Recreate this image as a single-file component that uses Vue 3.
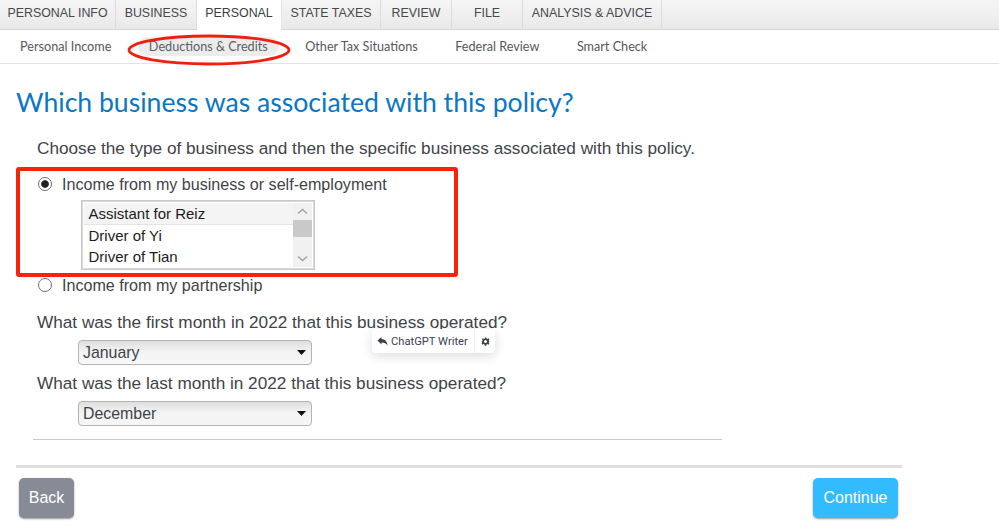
<script setup>
const tabs = [
  { label: 'PERSONAL INFO', w: 116 },
  { label: 'BUSINESS', w: 81 },
  { label: 'PERSONAL', w: 85, active: true },
  { label: 'STATE TAXES', w: 99 },
  { label: 'REVIEW', w: 71 },
  { label: 'FILE', w: 71 },
  { label: 'ANALYSIS & ADVICE', w: 139 }
]
const subs = ['Personal Income', 'Deductions & Credits', 'Other Tax Situations', 'Federal Review', 'Smart Check']
const businesses = ['Assistant for Reiz', 'Driver of Yi', 'Driver of Tian']
</script>

<template>
  <div class="page">
    <nav class="tabs">
      <div v-for="t in tabs" :key="t.label" class="tab" :class="{ active: t.active }" :style="{ width: t.w + 'px' }">{{ t.label }}</div>
    </nav>
    <nav class="subs">
      <div v-for="(s, i) in subs" :key="s" class="sub" :class="{ current: i === 1 }">{{ s }}</div>
    </nav>

    <main class="main">
      <h1 class="title">Which business was associated with this policy?</h1>
      <div class="form">
        <p class="intro">Choose the type of business and then the specific business associated with this policy.</p>

        <div class="radio-row first">
          <span class="radio on"></span>
          <span>Income from my business or self-employment</span>
        </div>
        <div class="listbox">
          <div class="options">
            <div v-for="(b, i) in businesses" :key="b" class="option" :class="{ selected: i === 0 }">{{ b }}</div>
          </div>
          <div class="scrollbar">
            <svg class="arrow" width="17" height="17" viewBox="0 0 17 17"><path d="M4 10.5 8.5 6.5 13 10.5" fill="none" stroke="#a3a3a3" stroke-width="1.5" /></svg>
            <div class="thumb"></div>
            <div class="track"></div>
            <svg class="arrow" width="17" height="17" viewBox="0 0 17 17"><path d="M4 6.5 8.5 10.5 13 6.5" fill="none" stroke="#a3a3a3" stroke-width="1.5" /></svg>
          </div>
        </div>
        <div class="radio-row second">
          <span class="radio"></span>
          <span>Income from my partnership</span>
        </div>

        <p class="question q1">What was the first month in 2022 that this business operated?</p>
        <div class="select">
          <span>January</span>
          <svg width="9" height="5" viewBox="0 0 9 5"><path d="M0 0H9L4.5 5Z" fill="#111" /></svg>
        </div>
        <p class="question q2">What was the last month in 2022 that this business operated?</p>
        <div class="select">
          <span>December</span>
          <svg width="9" height="5" viewBox="0 0 9 5"><path d="M0 0H9L4.5 5Z" fill="#111" /></svg>
        </div>
      </div>

      <hr class="thin" />
      <hr class="thick" />
      <div class="actions">
        <button class="btn back">Back</button>
        <button class="btn continue">Continue</button>
      </div>
    </main>

    <div class="annot-rect"></div>
    <svg class="annot-ellipse" width="170" height="36" viewBox="0 0 170 36">
      <ellipse cx="85" cy="18" rx="80" ry="14" fill="none" stroke="#f0200f" stroke-width="2.8" />
    </svg>

    <div class="chip">
      <div class="chip-main">
        <svg width="11" height="9" viewBox="0 0 10 9"><path d="M0 3.6 4 0V2.1C7.6 2.3 9.6 4.3 10 8.6 8.8 6.6 7 5.5 4 5.5V7.4Z" fill="#3a4250" /></svg>
        <span>ChatGPT Writer</span>
      </div>
      <div class="chip-gear">
        <svg width="9" height="9" viewBox="0 0 24 24"><path fill-rule="evenodd" d="M10 1h4l.7 3.2 2.2.9 2.8-1.8 2.8 2.8-1.8 2.8.9 2.2L24 12v0l-2.4.9-.9 2.2 1.8 2.8-2.8 2.8-2.8-1.8-2.2.9L14 23h-4l-.7-3.2-2.2-.9-2.8 1.8-2.8-2.8 1.8-2.8-.9-2.2L0 12l3.4-.9.9-2.2L2.5 6.1l2.8-2.8 2.8 1.8 2.2-.9ZM12 8a4 4 0 1 0 0 8 4 4 0 0 0 0-8Z" fill="#3a4250" /></svg>
      </div>
    </div>
  </div>
</template>

<style>
html, body { margin: 0; background: #fff; }
</style>

<style scoped>
.page {
  position: relative;
  width: 999px;
  height: 531px;
  overflow: hidden;
  background: #fff;
  font-family: "Liberation Sans", Arial, sans-serif;
  color: #3f4349;
}
.tabs {
  display: flex;
  height: 30px;
  box-sizing: border-box;
  background: linear-gradient(#f5f5f5, #e9e9e9);
  border-bottom: 1px solid #d6d6d6;
}
.tab {
  box-sizing: border-box;
  height: 30px;
  flex: none;
  display: flex;
  align-items: center;
  justify-content: center;
  padding-bottom: 4px;
  font-size: 12.4px;
  color: #46494d;
  border-right: 1px solid #dcdcdc;
  white-space: nowrap;
}
.tab.active { background: #fff; border-right: 1px solid #e4e4e4; color: #3b3e42; }
.subs {
  position: relative;
  z-index: 0;
  display: flex;
  height: 34px;
  box-sizing: border-box;
  padding-left: 20px;
  gap: 37.5px;
  align-items: center;
  border-bottom: 1px solid #e3e3e3;
  font-family: Lato, sans-serif;
  font-size: 12.65px;
  color: #55585c;
}
.sub { white-space: nowrap; }
.sub.current { position: relative; color: #5b5e62; }
.sub.current::before {
  content: "";
  position: absolute;
  left: -11px;
  right: -11px;
  top: -2px;
  bottom: -2px;
  border-radius: 11px;
  background: #ececec;
  z-index: -1;
}
.main { padding: 0 0 0 16px; width: 886px; }
.title {
  margin: 22px 0 0;
  font-family: Lato, sans-serif;
  font-size: 26.6px;
  line-height: 32px;
  font-weight: 400;
  color: #0a77c4;
  white-space: nowrap;
}
.form { padding-left: 21px; font-size: 17.2px; }
.intro { margin: 20px 0 0; line-height: 20px; white-space: nowrap; }
.radio-row { display: flex; align-items: center; gap: 10px; height: 20px; margin-left: 1px; line-height: 20px; font-size: 16.1px; }
.radio-row.first { margin-top: 16px; }
.radio-row.second { margin-top: 5px; }
.radio {
  box-sizing: border-box;
  width: 14px;
  height: 14px;
  border-radius: 50%;
  border: 1px solid #6f6f6f;
  background: #fff;
  flex: none;
}
.radio.on { background: radial-gradient(circle, #222 0 3.4px, #fff 4.2px); }
.listbox {
  display: flex;
  box-sizing: border-box;
  width: 234px;
  height: 70px;
  margin: 6px 0 0 44px;
  border: 1px solid #c8c8c8;
  outline: 1px solid #d8d8d8;
  outline-offset: -2px;
  color: #1c1c1c;
  font-size: 15px;
  padding: 2px;
}
.options { flex: 1; }
.option { height: 21.6px; line-height: 21.6px; padding-left: 4.5px; white-space: nowrap; }
.option.selected { background: #f4f4f4; border-bottom: 1px solid #e4e4e4; box-sizing: border-box; }
.scrollbar { width: 19px; display: flex; flex-direction: column; background: #f1f1f1; align-items: center; }
.arrow { flex: none; }
.thumb { width: 100%; height: 17px; background: #c9c9c9; flex: none; }
.track { flex: 1; }
.question { margin: 0; line-height: 20px; white-space: nowrap; }
.question.q1 { margin-top: 17px; }
.question.q2 { margin-top: 8px; }
.select {
  box-sizing: border-box;
  display: flex;
  align-items: center;
  justify-content: space-between;
  width: 234px;
  height: 25px;
  margin: 8px 0 0 41px;
  padding: 0 5px 0 4px;
  border: 1px solid #b4b4b4;
  border-radius: 4px;
  background: linear-gradient(#dedede, #f3f3f3 45%, #f6f6f6);
  font-size: 15.9px;
  color: #3f4349;
}
.thin { border: 0; height: 1px; background: #c9c9c9; width: 689px; margin: 13px 0 0 17px; }
.thick { border: 0; height: 3px; background: #dfdfdf; width: 886px; margin: 25px 0 0; }
.actions { display: flex; justify-content: space-between; margin-top: 10px; padding: 0 4px 0 3px; }
.btn {
  box-sizing: border-box;
  height: 40px;
  border: 0;
  border-radius: 5px;
  font-family: "Liberation Sans", Arial, sans-serif;
  font-size: 16px;
  color: #fff;
  padding: 0;
  box-shadow: 0 1px 2px rgba(0, 0, 0, .4);
}
.back { width: 55px; background: #868b95; }
.continue { width: 85px; background: #33bbff; }
.annot-rect {
  position: absolute;
  left: 16px;
  top: 167px;
  width: 442px;
  height: 110px;
  box-sizing: border-box;
  border: 4px solid #f8230a;
  border-radius: 3px;
}
.annot-ellipse { position: absolute; left: 124px; top: 32px; }
.chip {
  position: absolute;
  left: 372px;
  top: 329px;
  width: 123px;
  height: 24px;
  display: flex;
  background: #fff;
  border-radius: 4px;
  box-shadow: 0 3px 12px rgba(0, 0, 0, .14);
  font-family: Roboto, sans-serif;
  font-size: 11.2px;
  color: #3a4250;
}
.chip-main { flex: 1; display: flex; align-items: center; gap: 3px; padding-left: 5px; border-right: 1px solid #f1f1f1; white-space: nowrap; }
.chip-gear { width: 20px; display: flex; align-items: center; justify-content: center; }
</style>
